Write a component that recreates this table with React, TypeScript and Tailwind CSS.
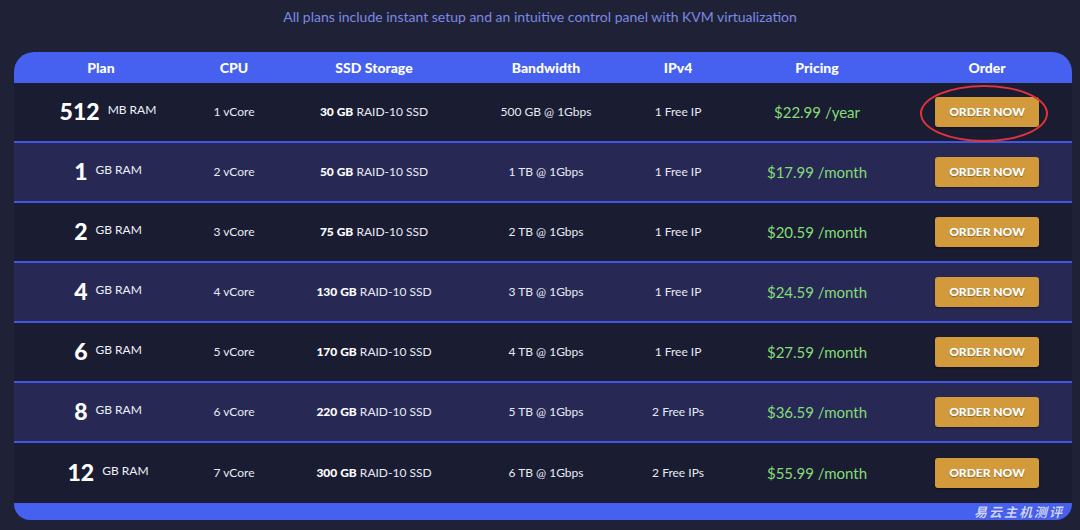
import React from 'react';

interface Plan {
  size: string;
  unit: string;
  cpu: string;
  ssd: string;
  bandwidth: string;
  ip: string;
  price: string;
  period: string;
}

const plans: Plan[] = [
  { size: '512', unit: 'MB RAM', cpu: '1 vCore', ssd: '30 GB', bandwidth: '500 GB @ 1Gbps', ip: '1 Free IP', price: '$22.99', period: '/year' },
  { size: '1', unit: 'GB RAM', cpu: '2 vCore', ssd: '50 GB', bandwidth: '1 TB @ 1Gbps', ip: '1 Free IP', price: '$17.99', period: '/month' },
  { size: '2', unit: 'GB RAM', cpu: '3 vCore', ssd: '75 GB', bandwidth: '2 TB @ 1Gbps', ip: '1 Free IP', price: '$20.59', period: '/month' },
  { size: '4', unit: 'GB RAM', cpu: '4 vCore', ssd: '130 GB', bandwidth: '3 TB @ 1Gbps', ip: '1 Free IP', price: '$24.59', period: '/month' },
  { size: '6', unit: 'GB RAM', cpu: '5 vCore', ssd: '170 GB', bandwidth: '4 TB @ 1Gbps', ip: '1 Free IP', price: '$27.59', period: '/month' },
  { size: '8', unit: 'GB RAM', cpu: '6 vCore', ssd: '220 GB', bandwidth: '5 TB @ 1Gbps', ip: '2 Free IPs', price: '$36.59', period: '/month' },
  { size: '12', unit: 'GB RAM', cpu: '7 vCore', ssd: '300 GB', bandwidth: '6 TB @ 1Gbps', ip: '2 Free IPs', price: '$55.99', period: '/month' },
];

const headers = ['Plan', 'CPU', 'SSD Storage', 'Bandwidth', 'IPv4', 'Pricing', 'Order'];

const cols = 'grid grid-cols-[174px_92px_188px_156px_108px_170px_170px]';

export default function App() {
  return (
    <div className="min-h-screen w-[1080px] h-[530px] bg-[#1f2237] pt-[9px] font-['Lato',sans-serif] text-[#e8e9f4]">
      <p className="text-center text-[14px] leading-4 text-[#7c88e4]">
        All plans include instant setup and an intuitive control panel with KVM virtualization
      </p>

      <div className="relative ml-[14px] mt-[27px] w-[1058px]">
        {/* Header */}
        <div className={`${cols} h-[31px] items-center rounded-t-[20px] bg-[#4661f0] text-[14px] font-black text-white`}>
          {headers.map((h) => (
            <div key={h} className="text-center">{h}</div>
          ))}
        </div>

        {/* Rows */}
        {plans.map((p, i) => (
          <div
            key={p.size}
            className={`${cols} h-[60px] items-center text-[12px] ${i % 2 === 0 ? 'bg-[#1a1c31]' : 'bg-[#272954]'} ${
              i < plans.length - 1 ? 'border-b-2 border-[#4256df]' : ''
            }`}
          >
            <div className="flex items-center justify-center gap-[8px] pl-[14px]">
              <span className="-translate-y-[1px] text-[23px] font-black leading-none text-white">{p.size}</span>
              <span className="-translate-y-[2px] text-[12px] text-[#eef0fa]">{p.unit}</span>
            </div>
            <div className="text-center">{p.cpu}</div>
            <div className="text-center">
              <span className="font-black text-white">{p.ssd}</span> RAID-10 SSD
            </div>
            <div className="text-center">{p.bandwidth}</div>
            <div className="text-center">{p.ip}</div>
            <div className="text-center text-[15px] text-[#84dc78]">
              {p.price} {p.period}
            </div>
            <div className="flex justify-center">
              <button className="h-[30px] w-[104px] rounded-[3px] bg-[#d39a3c] text-[12px] font-black text-white shadow-[0_1px_2px_rgba(0,0,0,0.4)] [text-shadow:0_1px_1px_rgba(0,0,0,0.35)]">
                ORDER NOW
              </button>
            </div>
          </div>
        ))}

        {/* Footer bar */}
        <div className="flex h-[17px] items-center justify-end rounded-b-[16px] bg-[#4661f0] pr-[8px]">
          <span className="font-['Noto_Sans_CJK_SC',sans-serif] text-[13px] font-bold italic leading-none tracking-[2px] text-[#cdd4ff] [text-shadow:0_0_1px_#2a3aa0]">
            易云主机测评
          </span>
        </div>

        {/* annotation ring */}
        <div className="pointer-events-none absolute left-[906px] top-[33px] h-[57px] w-[128px] rounded-[50%] border-2 border-[#e0343b]" />
      </div>
    </div>
  );
}
